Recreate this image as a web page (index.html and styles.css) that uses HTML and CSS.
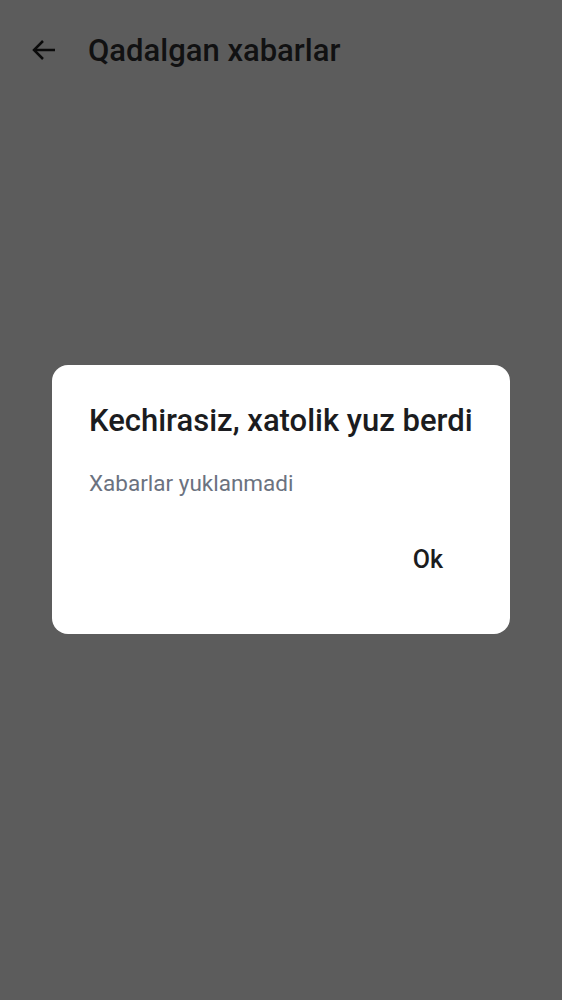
FILE: index.html
```html
<!DOCTYPE html>
<html>
<head>
<meta charset="utf-8">
<link rel="stylesheet" href="styles.css">
</head>
<body>
<div class="screen">
  <header class="topbar">
    <svg class="back" width="24" height="22" viewBox="0 0 24 22" fill="none" stroke="#0b0b0b" stroke-width="2.5" stroke-linecap="butt" stroke-linejoin="miter">
      <path d="M24 11H3"/>
      <path d="M12 2L3 11l9 9"/>
    </svg>
    <h1 class="title">Qadalgan xabarlar</h1>
  </header>
  <main class="body">
    <div class="dialog">
      <h2 class="dlg-title">Kechirasiz, xatolik yuz berdi</h2>
      <p class="dlg-text">Xabarlar yuklanmadi</p>
      <div class="dlg-actions">
        <button class="dlg-btn">Ok</button>
      </div>
    </div>
  </main>
</div>
</body>
</html>
```
FILE: styles.css
```css
html, body {
  margin: 0;
  padding: 0;
  background: #5c5c5c;
  font-family: Roboto, "Noto Sans", sans-serif;
}
.screen {
  width: 562px;
  height: 1000px;
  display: flex;
  flex-direction: column;
}
.topbar {
  height: 100px;
  display: flex;
  align-items: center;
  padding-left: 31px;
  gap: 33px;
  box-sizing: border-box;
}
.back { display: block; }
.title {
  margin: 0;
  font-size: 31px;
  font-weight: 500;
  color: #111112;
  letter-spacing: 0;
}
.body {
  flex: 1;
  display: flex;
  flex-direction: column;
  align-items: center;
  padding-top: 265px;
}
.dialog {
  width: 458px;
  height: 269px;
  box-sizing: border-box;
  background: #ffffff;
  border-radius: 16px;
  padding: 36px 37px 0 37px;
}
.dlg-title {
  margin: 0;
  font-size: 31px;
  font-weight: 500;
  color: #1b1c20;
  line-height: 40px;
}
.dlg-text {
  margin: 28px 0 0 0;
  font-size: 22.5px;
  color: #6b7280;
  line-height: 28px;
}
.dlg-actions {
  display: flex;
  justify-content: flex-end;
  margin-top: 47px;
}
.dlg-btn {
  border: none;
  background: none;
  padding: 0 30px 0 0;
  font-family: inherit;
  font-size: 25px;
  color: #1b1c20;
  font-weight: 500;
  line-height: 32px;
}
```
